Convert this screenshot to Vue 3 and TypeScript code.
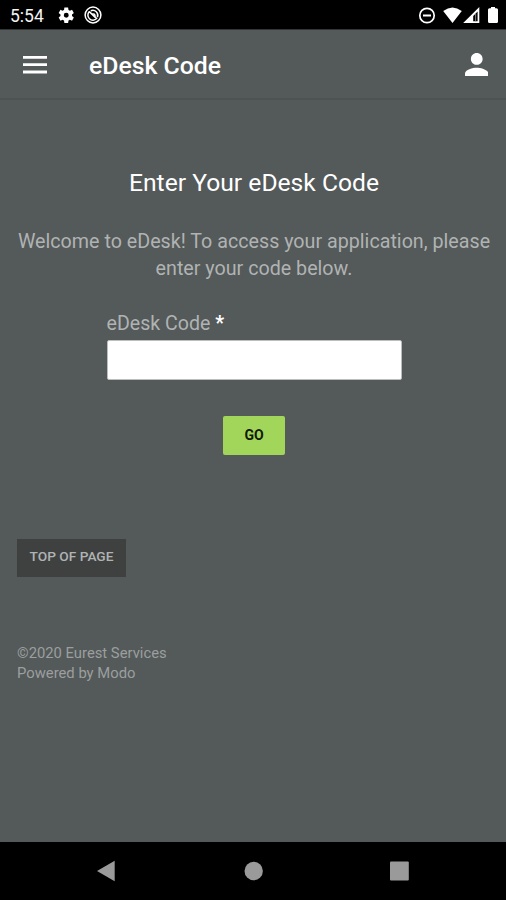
<script setup lang="ts">
import { ref } from 'vue'

const code = ref('')
</script>

<template>
  <div class="screen">
    <div class="status-bar">
      <span class="clock">5:54</span>
      <svg class="gear" viewBox="0 0 24 24">
        <path fill-rule="evenodd" d="M19.43 12.98c.04-.32.07-.64.07-.98s-.03-.66-.07-.98l2.11-1.65c.19-.15.24-.42.12-.64l-2-3.46c-.12-.22-.39-.3-.61-.22l-2.49 1c-.52-.4-1.08-.73-1.69-.98l-.38-2.65C14.46 2.18 14.25 2 14 2h-4c-.25 0-.46.18-.49.42l-.38 2.65c-.61.25-1.17.59-1.69.98l-2.49-1c-.23-.09-.49 0-.61.22l-2 3.46c-.13.22-.07.49.12.64l2.11 1.65c-.04.32-.07.65-.07.98s.03.66.07.98l-2.11 1.65c-.19.15-.24.42-.12.64l2 3.46c.12.22.39.3.61.22l2.49-1c.52.4 1.08.73 1.69.98l.38 2.65c.03.24.24.42.49.42h4c.25 0 .46-.18.49-.42l.38-2.65c.61-.25 1.17-.59 1.69-.98l2.49 1c.23.09.49 0 .61-.22l2-3.46c.12-.22.07-.49-.12-.64l-2.11-1.65zM12 15.2A3.2 3.2 0 1 1 12 8.8a3.2 3.2 0 0 1 0 6.4z" />
      </svg>
      <svg class="radar" viewBox="0 0 18 18">
        <circle cx="9" cy="9" r="7.9" />
        <path d="M5.3 5.6A5 5 0 1 0 12.6 12.6L5.3 5.6M6.8 4.7A5 5 0 0 1 13.4 11.2" />
        <path d="M8.2 8.2Q10.6 7 11.2 10.6" />
      </svg>
      <svg class="signals" viewBox="0 0 80 20">
        <circle cx="9" cy="10.5" r="7.2" fill="none" stroke="#fff" stroke-width="1.7" />
        <path d="M5 9.6H13V11.4H5zM25.2 6.1Q34.5-.9 43.8 6.1L34.5 18zM73 3.3V2h4v1.3h1.5q1.5 0 1.5 1.5V16.5q0 1.5-1.5 1.5h-7q-1.5 0-1.5-1.5V4.8q0-1.5 1.5-1.5z" />
        <path fill-rule="evenodd" d="M61.3 2V18H45.2zM59.6 6.4L55.2 11V16.2H59.6z" />
        <path d="M57.6 9V16.2" stroke="#888" stroke-width=".9" />
      </svg>
    </div>

    <header class="app-bar">
      <button class="icon-button" aria-label="Menu">
        <svg class="menu" viewBox="0 0 24 18"><path d="M0 0H24V2.8H0zM0 7.3H24V10.1H0zM0 14.6H24V17.4H0z" /></svg>
      </button>
      <h1>eDesk Code</h1>
      <button class="icon-button account" aria-label="Account">
        <svg class="person" viewBox="4 4 16 16"><path d="M12 12c2.21 0 4-1.79 4-4s-1.79-4-4-4-4 1.79-4 4 1.79 4 4 4zm0 2c-2.67 0-8 1.34-8 4v2h16v-2c0-2.66-5.33-4-8-4z" /></svg>
      </button>
    </header>

    <main>
      <h2>Enter Your eDesk Code</h2>
      <p class="intro">Welcome to eDesk! To access your application, please<br />enter your code below.</p>
      <form @submit.prevent>
        <label for="code">eDesk Code <b>*</b></label>
        <input id="code" v-model="code" type="text" />
        <button class="go" type="submit">GO</button>
      </form>
      <button class="top">TOP OF PAGE</button>
      <footer>©2020 Eurest Services<br />Powered by Modo</footer>
    </main>

    <nav class="system-nav">
      <svg viewBox="0 0 506 58">
        <path d="M97 29L114.7 18.7V39.3z" />
        <circle cx="253.7" cy="29" r="9.2" />
        <rect x="390" y="19.6" width="18.8" height="18.8" rx="1" />
      </svg>
    </nav>
  </div>
</template>

<style>
body {
  margin: 0;
  background: #545959;
}
</style>

<style scoped>
.screen {
  width: 506px;
  height: 900px;
  display: flex;
  flex-direction: column;
  overflow: hidden;
  background: #545959;
  color: #b0b3b3;
  font-family: Roboto, sans-serif;
}
svg {
  display: block;
  fill: #fff;
}
button {
  border: 0;
  padding: 0;
  background: none;
  font-family: inherit;
}
.status-bar {
  height: 30px;
  box-sizing: border-box;
  border-bottom: 1px solid #333636;
  flex-shrink: 0;
  display: flex;
  align-items: center;
  padding: 2px 8px 0 10px;
  background: #000;
  color: #f4f4f4;
}
.clock {
  width: 47px;
  font-size: 17.5px;
  line-height: 20px;
}
.gear {
  width: 18.5px;
  height: 18.5px;
}
.radar {
  width: 18px;
  height: 18px;
  margin: 0 0 1px 8.5px;
  fill: none;
  stroke: #fff;
  stroke-width: 1.5;
}
.signals {
  width: 80px;
  height: 20px;
  margin: 0 0 2px auto;
}
.app-bar {
  height: 70px;
  box-sizing: border-box;
  flex-shrink: 0;
  display: flex;
  align-items: center;
  padding: 1px 18px 0 23px;
  border-bottom: 2px solid #4d5253;
}
.icon-button {
  display: block;
}
.menu {
  width: 24px;
  height: 18px;
}
.person {
  width: 23.5px;
  height: 23.5px;
}
h1 {
  margin: 2px 0 0 42px;
  color: #fff;
  font-size: 24.8px;
  line-height: 32px;
  font-weight: 500;
}
.account {
  margin-left: auto;
}
main {
  flex: 1;
  display: flex;
  flex-direction: column;
  align-items: flex-start;
  padding: 67px 15px 0 17px;
}
h2 {
  align-self: center;
  margin: 0;
  color: #fff;
  font-size: 24.65px;
  line-height: 32px;
  font-weight: 400;
  white-space: nowrap;
}
.intro {
  align-self: center;
  margin: 29px 0 0;
  font-size: 19.7px;
  line-height: 27px;
  text-align: center;
  white-space: nowrap;
}
form {
  width: 295px;
  margin: 30px 0 0 89.5px;
  display: flex;
  flex-direction: column;
}
label {
  height: 27.5px;
  font-size: 19.6px;
  line-height: 24px;
}
label b {
  color: #fff;
}
input {
  height: 40px;
  box-sizing: border-box;
  border: 1px solid #bcbebe;
  border-radius: 2px;
  padding: 0 10px;
  outline: 0;
  background: #fff;
  font: 19px Roboto, sans-serif;
}
.go {
  width: 62px;
  height: 39px;
  margin-top: 36.5px;
  padding-bottom: 2px;
  align-self: center;
  border-radius: 2px;
  background: #a1d65b;
  color: #111a08;
  font-size: 14px;
  font-weight: 700;
}
.top {
  width: 109px;
  height: 38px;
  margin-top: 84px;
  padding-bottom: 4px;
  background: #3f4141;
  color: #b0b3b3;
  font-size: 13.7px;
  font-weight: 500;
}
footer {
  margin-top: 67px;
  color: #9b9f9f;
  font-size: 14.8px;
  line-height: 19.5px;
}
.system-nav {
  height: 58px;
  flex-shrink: 0;
  background: #000;
}
.system-nav svg {
  width: 506px;
  height: 58px;
  fill: #9a9a9a;
}
</style>
